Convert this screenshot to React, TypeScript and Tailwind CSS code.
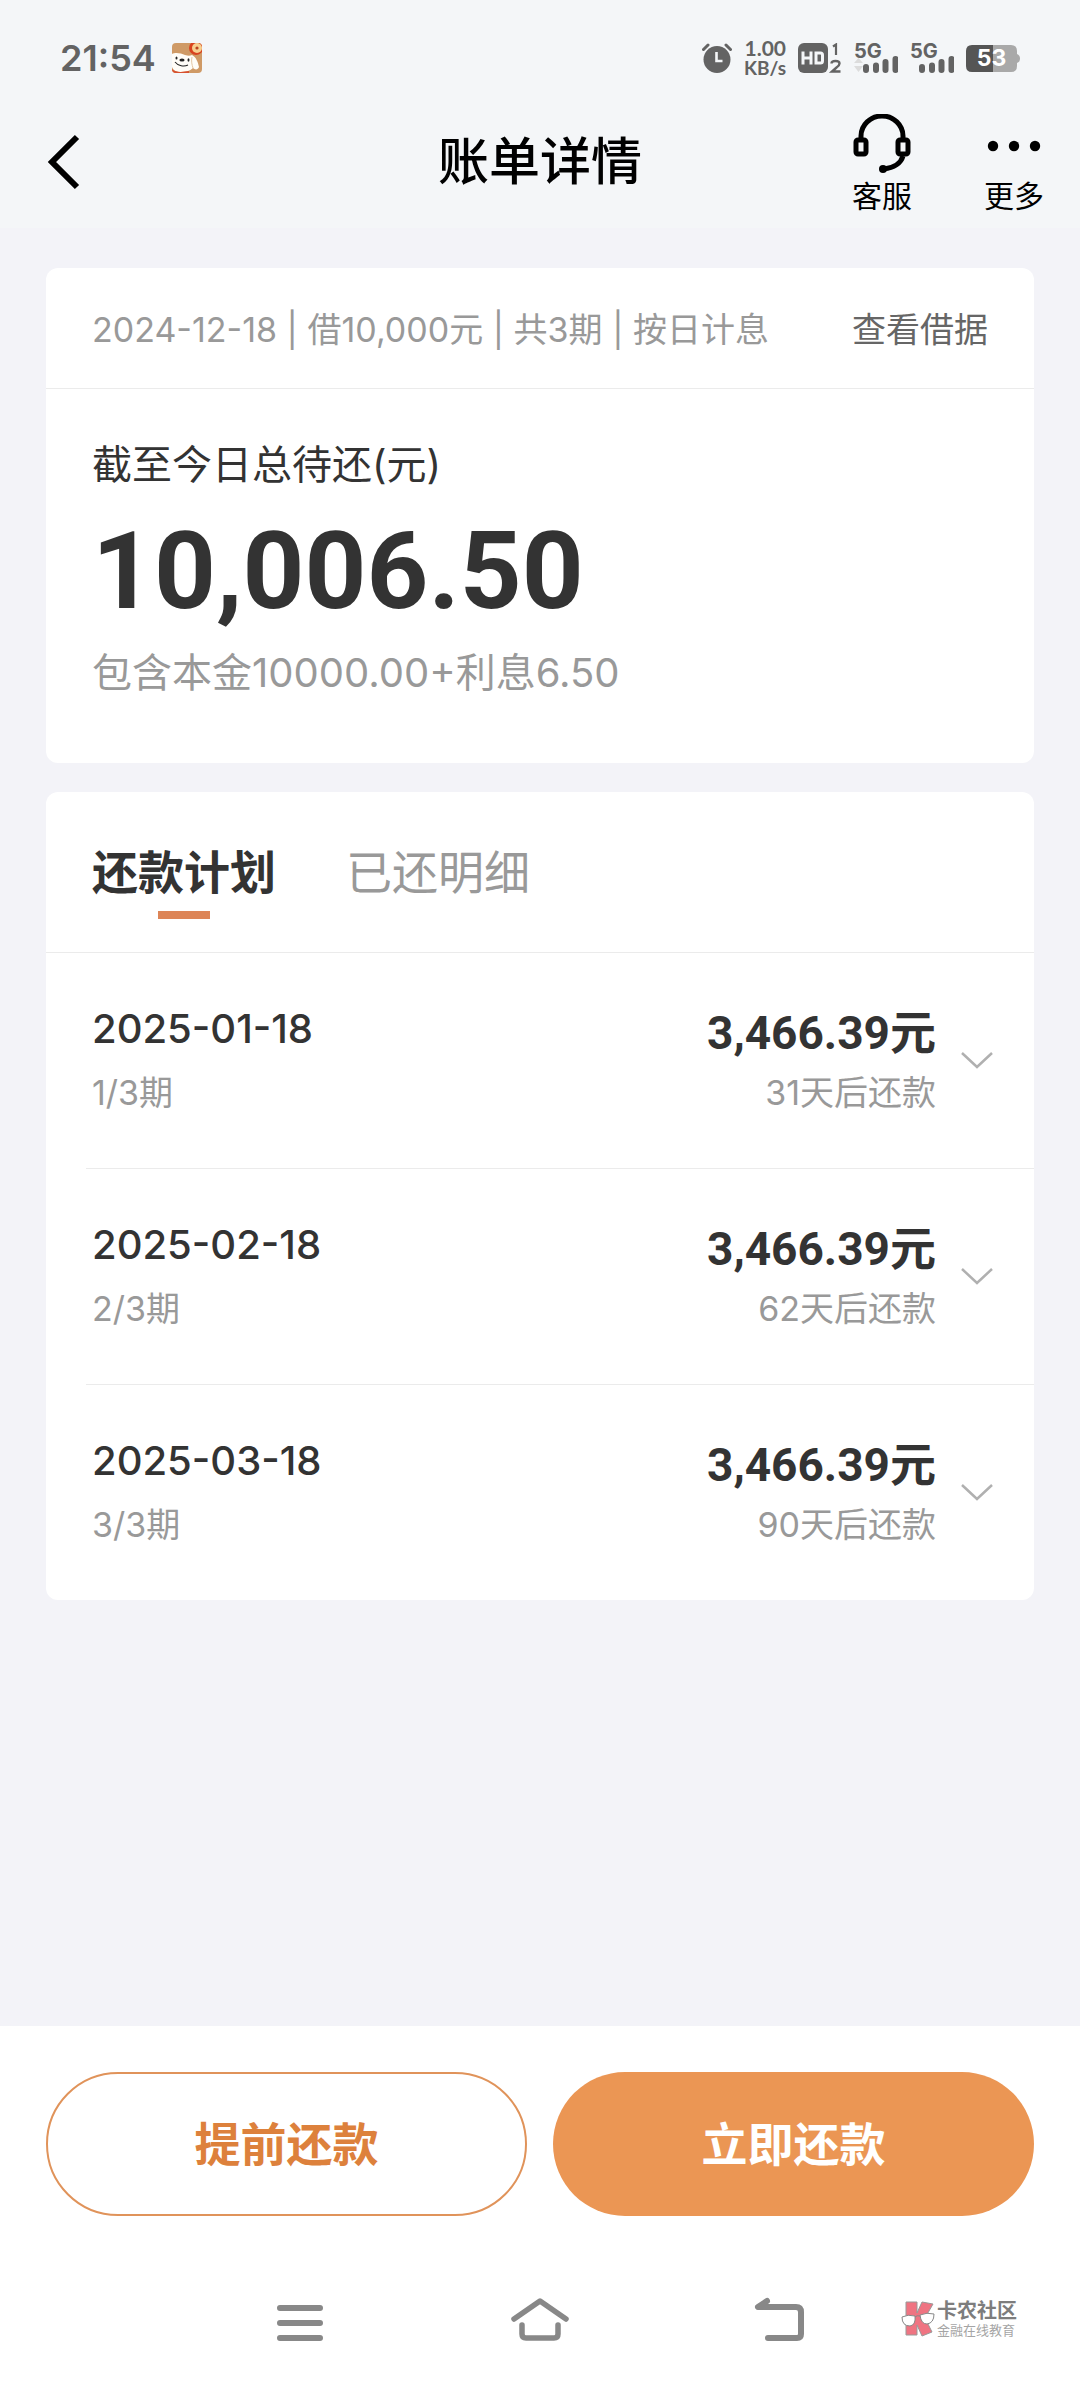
import { useState } from "react";

type Installment = {
    id: number;
    date: string;
    period: string;
    amount: string;
    remain: string;
};

const installments: Installment[] = [
    { id: 1, date: "2025-01-18", period: "1/3期", amount: "3,466.39", remain: "31天后还款" },
    { id: 2, date: "2025-02-18", period: "2/3期", amount: "3,466.39", remain: "62天后还款" },
    { id: 3, date: "2025-03-18", period: "3/3期", amount: "3,466.39", remain: "90天后还款" },
];

const tabs = ["还款计划", "已还明细"];

function MascotIcon() {
    return (
        <svg width="30" height="30" viewBox="0 0 30 30" aria-hidden="true">
            <clipPath id="mascot"><rect width="30" height="30" rx="4" /></clipPath>
            <g clipPath="url(#mascot)">
                <rect width="30" height="30" fill="#cf9a66" />
                <path d="M0 11c3-2 9-1 13 1 3 1 5 1 7 0 4 2 6 7 7 12-1 3-4 3-6 1-3 3-8 4-12 4-5 0-8-2-9-5z" fill="#fffdf8" />
                <path d="M20 14c-1 4 0 8 1 11" fill="none" stroke="#e3c7a4" />
                <path d="M0 26c4 4 11 3 17 2v2H0z" fill="#d8502f" />
                <circle cx="24" cy="5" r="7" fill="#d8431f" />
                <circle cx="25" cy="5" r="5" fill="#f7cf8f" />
                <circle cx="25" cy="5" r="1.6" fill="#b8431f" />
                <ellipse cx="10" cy="17" rx="2.6" ry="1.6" fill="#222" />
                <ellipse cx="4.500" cy="15" rx="1" ry="1.600" fill="#222" />
                <ellipse cx="16.500" cy="17" rx="1" ry="1.800" fill="#222" />
                <path d="M3 19c3 4 9 5 13 3" fill="none" stroke="#222" strokeWidth="1.100" />
            </g>
        </svg>
    );
}

function AlarmIcon() {
    return (
        <svg width="30" height="30" viewBox="0 0 30 30" aria-hidden="true">
            <circle cx="15" cy="16.500" r="13.500" fill="#636363" />
            <path d="M1.500 6.500 6 2M28.500 6.500 24 2" stroke="#636363" strokeWidth="3" strokeLinecap="round" />
            <path d="M14.500 9v9h6" fill="none" stroke="#f4f6f8" strokeWidth="2.600" />
        </svg>
    );
}

function HdIcon() {
    return (
        <svg width="44" height="30" viewBox="0 0 44 30" aria-hidden="true">
            <rect width="30" height="30" rx="6" fill="#636363" />
            <path d="M5 8.500v13M13 8.500v13M5 15h8M18 10v10h4.500q2 0 2-2v-6q0-2-2-2z" fill="none" stroke="#f4f6f8" strokeWidth="3" />
            <path d="M35 3.500 38 1.500V12" fill="none" stroke="#636363" strokeWidth="2.200" />
            <path d="M33.500 20.500q0-2.500 4-2.500t4 2.500q0 2-3 4L34 28.500h8.500" fill="none" stroke="#636363" strokeWidth="2.400" />
        </svg>
    );
}

function Signal({ arrows }: { arrows?: boolean }) {
    return (
        <span className="relative flex h-[30px] w-[44px] items-end justify-end">
            <span className="absolute left-0 top-0 text-[20px] font-bold leading-4">5G</span>
            <svg width="44" height="18" viewBox="0 0 44 18" aria-hidden="true">
                {arrows && <path d="M0 8 4.500 3 9 8zM0 11 4.500 17 9 11z" fill="#dcdcdc" />}
                <path d="M12 15v-3M22 15v-4.500M31.500 15V7M41.500 15V4" stroke="#636363" strokeWidth="6" strokeLinecap="round" />
            </svg>
        </span>
    );
}

function Battery() {
    return (
        <span className="relative flex h-[27px] w-[54px] items-center">
            <svg className="absolute inset-0" width="54" height="27" viewBox="0 0 54 27" aria-hidden="true">
                <path d="M27 0h18q6 0 6 6v3q3 1 3 4.500T51 18v3q0 6-6 6H27z" fill="#a9a9a9" />
                <path d="M27 0H6Q0 0 0 6v15q0 6 6 6h21z" fill="#555" />
            </svg>
            <span className="relative w-[51px] text-center text-[23px] font-bold leading-none text-white">53</span>
        </span>
    );
}

function StatusBar() {
    return (
        <div className="flex h-[96px] items-center justify-between px-[60px] pt-[20px] text-[#636363]">
            <div className="flex items-center gap-4">
                <span className="text-[36px] font-semibold leading-10">21:54</span>
                <MascotIcon />
            </div>
            <div className="flex items-center gap-3">
                <AlarmIcon />
                <span className="flex flex-col items-end font-[Lato]">
                    <span className="text-[21px] font-bold leading-5">1.00</span>
                    <span className="text-[19px] font-bold leading-5">KB/s</span>
                </span>
                <HdIcon />
                <Signal arrows />
                <Signal />
                <Battery />
            </div>
        </div>
    );
}

function NavBar() {
    return (
        <header className="grid h-[132px] grid-cols-[1fr_auto_1fr] items-center px-[36px]">
            <button type="button" aria-label="返回" className="ml-2 justify-self-start">
                <svg width="36" height="56" viewBox="0 0 36 56">
                    <path d="M33 3 8 28l25 25" fill="none" stroke="#000" strokeWidth="6" />
                </svg>
            </button>
            <h1 className="text-[51px] font-medium leading-[60px] text-black">账单详情</h1>
            <div className="flex gap-[72px] justify-self-end pt-1 text-[30px] leading-9 text-black">
                <button type="button" className="flex flex-col items-center gap-1">
                    <svg width="60" height="60" viewBox="0 0 60 60">
                        <g fill="none" stroke="#000" strokeWidth="5">
                            <path d="M9 24v-2a21 20 0 0 1 42 0v2" />
                            <rect x="4" y="26" width="10" height="14" rx="2" />
                            <rect x="46" y="26" width="10" height="14" rx="2" />
                            <path d="M51 42c-2 7-9 12-19 13" />
                        </g>
                        <circle cx="31" cy="55" r="4" />
                    </svg>
                    客服
                </button>
                <button type="button" className="flex flex-col items-center gap-1">
                    <svg width="60" height="60" viewBox="0 0 60 60">
                        <circle cx="9" cy="32" r="5.200" />
                        <circle cx="30" cy="32" r="5.200" />
                        <circle cx="51" cy="32" r="5.200" />
                    </svg>
                    更多
                </button>
            </div>
        </header>
    );
}

function SummaryCard() {
    return (
        <section className="rounded-xl bg-white">
            <div className="flex h-[121px] items-center justify-between border-b border-[#ebebeb] px-[46px] pt-[3px] text-[34px]">
                <p className="text-[#999]">2024-12-18 | 借10,000元 | 共3期 | 按日计息</p>
                <a href="#contract" className="text-[#666]">查看借据</a>
            </div>
            <div className="px-[46px] pb-[60px] pt-[46px]">
                <h2 className="text-[40px] leading-[60px] text-[#333]">截至今日总待还(元)</h2>
                <p className="pt-1 font-[Roboto] text-[108px] font-bold leading-[144px] text-[#333]">10,006.50</p>
                <p className="text-[40px] leading-[60px] text-[#999]">包含本金10000.00+利息6.50</p>
            </div>
        </section>
    );
}

function InstallmentRow({ item }: { item: Installment }) {
    const [open, setOpen] = useState(false);

    return (
        <li className="ml-[40px] border-b border-[#ebebeb] last:border-0">
            <button
                type="button"
                aria-expanded={open}
                onClick={() => setOpen(!open)}
                className="flex h-[215px] w-full items-center pl-[6px] pr-[40px] text-left"
            >
                <span className="flex flex-1 flex-col gap-1">
                    <span className="text-[40px] font-medium leading-[60px] text-[#333]">{item.date}</span>
                    <span className="text-[34px] leading-[60px] text-[#999]">{item.period}</span>
                </span>
                <span className="flex flex-col items-end">
                    <span className="pt-1 font-[Roboto,Noto_Sans_CJK_SC] text-[46px] font-bold leading-[60px] text-[#333]">{item.amount}元</span>
                    <span className="text-[34px] leading-[60px] text-[#999]">{item.remain}</span>
                </span>
                <svg className={`ml-6 ${open ? "rotate-180" : ""}`} width="34" height="20" viewBox="0 0 34 20">
                    <path d="M2 2l15 14L32 2" fill="none" stroke="#b0b0b0" strokeWidth="2.500" />
                </svg>
            </button>
        </li>
    );
}

function PlanCard() {
    const [active, setActive] = useState(0);

    return (
        <section className="rounded-xl bg-white">
            <div role="tablist" className="flex h-[161px] items-center gap-[70px] border-b border-[#ebebeb] px-[46px] text-[46px]">
                {tabs.map((tab, i) => (
                    <button
                        key={tab}
                        type="button"
                        role="tab"
                        aria-selected={i === active}
                        onClick={() => setActive(i)}
                        className={`relative leading-[70px] ${i === active ? "font-bold text-[#333]" : "text-[#999]"}`}
                    >
                        {tab}
                        {i === active && (
                            <span className="absolute -bottom-3 left-1/2 h-2 w-[52px] -translate-x-1/2 bg-[#dd8557]" />
                        )}
                    </button>
                ))}
            </div>
            <ul>
                {installments.map((item) => (
                    <InstallmentRow key={item.id} item={item} />
                ))}
            </ul>
        </section>
    );
}

function Watermark() {
    return (
        <div className="absolute bottom-[50px] right-[63px] flex items-center gap-[2px]">
            <svg width="34" height="36" viewBox="0 0 34 36" aria-hidden="true">
                <path d="M5 1h11v11l5-11 11 2-8 14 7 14-10 4-5-11v10H5z" fill="#ef7482" stroke="#999" />
                <path d="M1 16q6-3 13-1 1 9-5 10-8 0-8-9zM19 14q7-3 14-1 0 9-7 10-6 0-7-9z" fill="#fff" stroke="#888" />
                <path d="M14 16q2-2 5-1" fill="none" stroke="#888" />
            </svg>
            <div>
                <p className="text-[20px] font-bold leading-[22px] text-[#7d7d7d]">卡农社区</p>
                <p className="text-[13px] leading-4 text-[#a5a5a5]">金融在线教育</p>
            </div>
        </div>
    );
}

function Footer() {
    return (
        <footer className="relative bg-white px-[46px] pt-[46px]">
            <div className="grid grid-cols-2 gap-[26px] text-[46px] font-bold">
                <button type="button" className="h-[144px] rounded-full border-2 border-[#e0935a] text-[#dd813c]">提前还款</button>
                <button type="button" className="h-[144px] rounded-full bg-[#eb9654] text-white">立即还款</button>
            </div>
            <nav className="-mx-[46px] flex h-[172px] justify-center pt-[56px]">
                <div className="grid h-24 w-2/3 grid-cols-3 place-items-center">
                    <button type="button" aria-label="最近任务">
                        <svg width="60" height="48" viewBox="0 0 60 48">
                            <path d="M10 12h40M10 27h40M10 42h40" stroke="#888" strokeWidth="6" strokeLinecap="round" />
                        </svg>
                    </button>
                    <button type="button" aria-label="主屏幕">
                        <svg width="60" height="48" viewBox="0 0 60 48">
                            <path d="M4 23 30 5l26 18M12 29v9q0 4 4 4h28q4 0 4-4v-9" fill="none" stroke="#888" strokeWidth="5.500" strokeLinecap="round" strokeLinejoin="round" />
                        </svg>
                    </button>
                    <button type="button" aria-label="返回上一页">
                        <svg width="60" height="48" viewBox="0 0 60 48">
                            <path d="M17 5 8 11h38q5 0 5 5v22q0 4-4 4H18" fill="none" stroke="#888" strokeWidth="6" strokeLinecap="round" strokeLinejoin="round" />
                        </svg>
                    </button>
                </div>
            </nav>
            <Watermark />
        </footer>
    );
}

export default function App() {
    return (
        <div className="flex min-h-screen flex-col bg-[#f3f3f8] font-[Inter,Noto_Sans_CJK_SC,sans-serif]">
            <div className="bg-[#f4f6f8]">
                <StatusBar />
                <NavBar />
            </div>
            <main className="flex flex-1 flex-col gap-[29px] px-[46px] pt-10">
                <SummaryCard />
                <PlanCard />
            </main>
            <Footer />
        </div>
    );
}
